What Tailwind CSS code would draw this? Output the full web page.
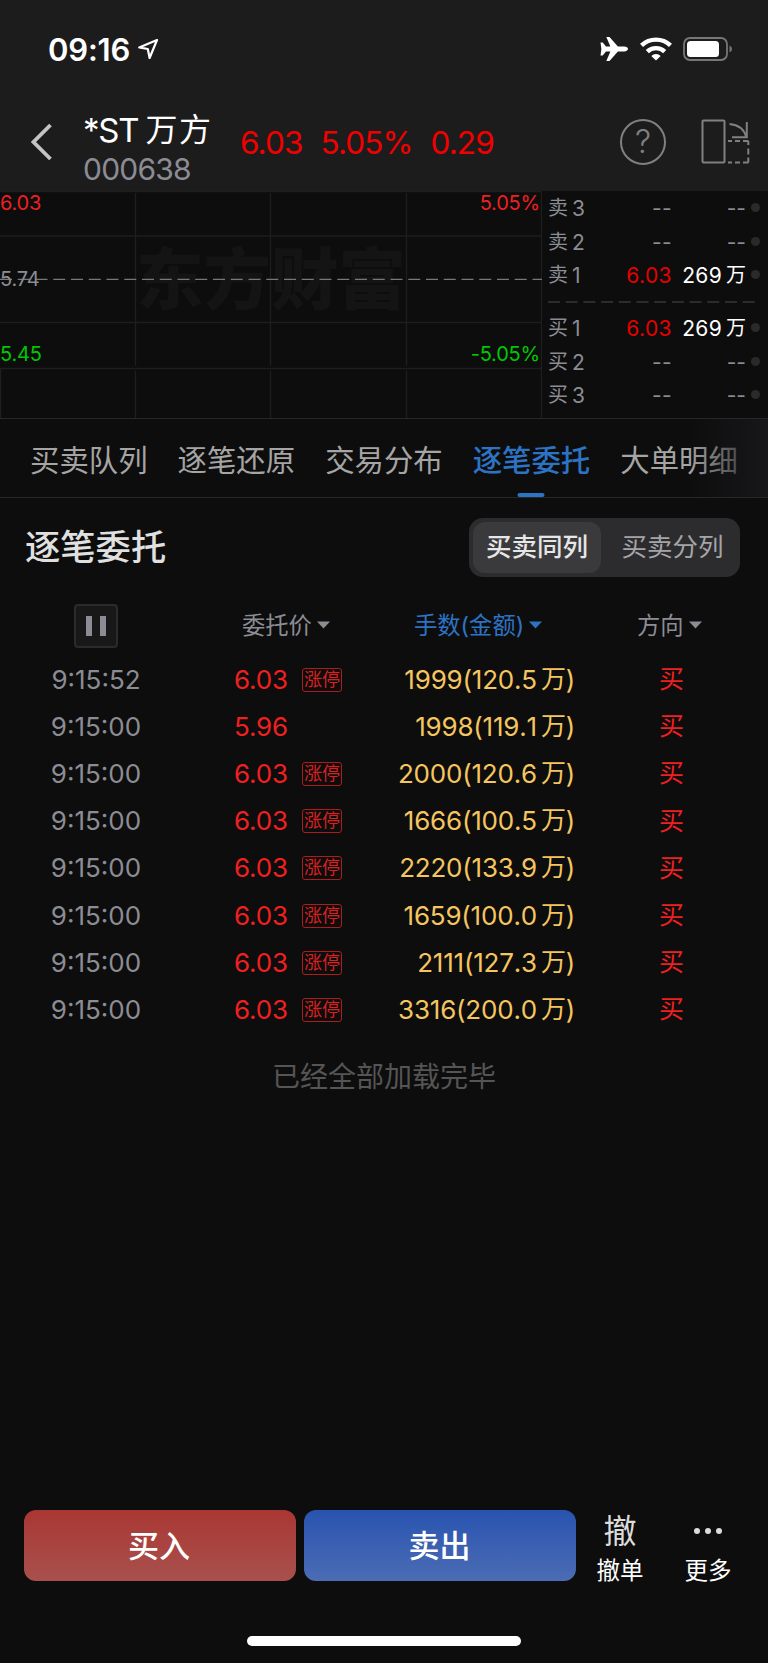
<!DOCTYPE html>
<html lang="zh-CN">
<head>
  <meta charset="UTF-8" />
  <meta name="viewport" content="width=device-width, initial-scale=1.0"/>
  <title>*ST万方 逐笔委托</title>
  <script src="https://cdn.jsdelivr.net/npm/@tailwindcss/browser@4"></script>
  <style>
    body {
      font-family: 'Inter', 'Noto Sans CJK SC', sans-serif;
    }
  </style>
</head>
<body class="bg-[#0d0d0d] text-white w-[768px] h-[1663px] flex flex-col overflow-hidden">

  <!-- Header -->
  <header class="h-[191px] shrink-0 bg-[#1c1c1c] flex flex-col">
    <div class="h-[98px] flex items-center justify-between pl-[48px] pr-[35px]">
      <div class="flex items-center gap-[7px]">
        <span class="text-[31px] leading-none font-semibold tracking-[-0.2px]">09:16</span>
        <svg class="w-[22px] h-[22px]" viewBox="0 0 22 22" fill="none" stroke="#fff" stroke-width="2.2" stroke-linejoin="round">
          <path d="M20 2 L2.2 9.4 L10.8 11 L12.6 20 Z" />
        </svg>
      </div>
      <div class="flex items-center">
        <svg class="w-[28px] h-[26px]" viewBox="0 0 28 26" fill="#fff">
          <path d="M0.5 6.6h2.2l3.3 4h4.400L6.300 1h3.200l8.400 9.600h6.300c2.400 0 3.800 1.300 3.800 2.400s-1.400 2.400-3.800 2.400h-6.300L9.500 25H6.300l4.100-9.600H6l-3.300 4H0.500l0.900-6.400z" />
        </svg>
        <svg class="w-[32px] h-[24px] ml-[12px]" viewBox="0 0 32 24" fill="none" stroke="#fff" stroke-width="4.400">
          <path d="M1.500 8.400 A21 21 0 0 1 30.500 8.400" />
          <path d="M7.300 14.600 A12.500 12.500 0 0 1 24.700 14.600" />
          <path d="M16 23.500 L11.300 19 A6.500 6.500 0 0 1 20.700 19 Z" fill="#fff" stroke="none" />
        </svg>
        <svg class="w-[50px] h-[24px] ml-[11px]" viewBox="0 0 50 24">
          <rect x="1" y="1" width="43" height="22" rx="6" fill="none" stroke="#777" stroke-width="1.800" />
          <rect x="4" y="4" width="32" height="16" rx="3.500" fill="#fff" />
          <path d="M46.500 8.500 Q49 9.500 49 12 T46.500 15.500Z" fill="#777" />
        </svg>
      </div>
    </div>
    <div class="h-[93px] flex items-center pl-[31px] pr-[18px]">
      <svg class="w-[22px] h-[38px] mt-[-5px]" viewBox="0 0 22 38" fill="none" stroke="#c4c4c4" stroke-width="3.800">
        <path d="M19.500 2 L2.500 19 L19.500 36" />
      </svg>
      <div class="ml-[30px] w-[130px] flex flex-col mt-[10px]">
        <div class="text-[33px] leading-[38px] whitespace-nowrap flex"><span class="tracking-[-1.200px]">*ST</span><span class="ml-[7px] text-[32px] tracking-[1.600px]">万方</span></div>
        <div class="text-[30px] leading-[40px] text-[#8c8c94] tracking-[-0.800px]">000638</div>
      </div>
      <div class="flex text-[31.500px] leading-none text-[#f00000] gap-[18px] ml-[27px] mt-[-3px] tracking-[-0.900px]">
        <span>6.03</span><span>5.05%</span><span>0.29</span>
      </div>
      <div class="ml-auto mt-[-5px] flex items-center gap-[35px]">
        <div class="w-[46px] h-[46px] rounded-full border-2 border-[#808080] text-[#808080] text-[32px] leading-none font-light flex items-center justify-center">?</div>
        <svg class="w-[49px] h-[46px]" viewBox="0 0 49 46" fill="none" stroke="#808080" stroke-width="2">
          <rect x="1.500" y="1.500" width="22" height="42" rx="1" />
          <path d="M28.500 5 Q42 6 45.500 18.500 M45.800 3 V18.300 H31" />
          <path d="M27 22h4M34 22h5M42 22h5.500M47.300 22v4M47.300 29.500v6M47.300 38.500v5M27 43.500h4M34 43.500h5M42 43.500h5.500" />
        </svg>
      </div>
    </div>
  </header>

  <!-- Intraday chart and order book -->
  <section class="h-[228px] shrink-0 flex border-b border-[#272727]">
    <div class="relative w-[541px] h-[227px]">
      <div class="absolute left-[136px] top-[54px] text-[67.500px] leading-[70px] font-black text-[#141414] whitespace-nowrap">东方财富</div>
      <svg class="absolute inset-0 w-[542px] h-[227px]" viewBox="0 0 542 227" fill="none">
        <path d="M0 0.500H542M0 45H542M0 131.500H542M0 177.500H542M0.500 178V227M135.500 2V175M270.500 2V175M406.500 2V175M135.500 180V227M270.500 180V227M406.500 180V227M541.500 0V227" stroke="#1e1e1e" stroke-width="1.300" />
        <path d="M0 88.300H542" stroke="#77777c" stroke-width="1.300" stroke-dasharray="12 5.750" />
      </svg>
      <div class="absolute inset-0 pt-[2px] text-[20px] leading-[20px] tracking-[-0.200px]">
        <div class="flex justify-between text-[#ee2020]"><span>6.03</span><span>5.05%</span></div>
        <div class="mt-[56px] text-[#8c8c94]">5.74</div>
        <div class="mt-[55px] flex justify-between text-[#00c800]"><span>5.45</span><span>-5.05%</span></div>
      </div>
    </div>
    <div id="orderBook" class="flex-1 pt-[1px] pl-[8px] pr-[8px] text-[21px] text-[#8c8c94]"></div>
  </section>

  <!-- Tabs -->
  <nav class="relative h-[79px] shrink-0 border-b border-[#272727] flex pl-[30px] gap-[30px] text-[29.400px] leading-[83px] text-[#a5a5a5] whitespace-nowrap">
    <span>买卖队列</span>
    <span>逐笔还原</span>
    <span>交易分布</span>
    <span class="relative font-medium text-[#2d73c4]">逐笔委托<i class="absolute left-1/2 -translate-x-1/2 top-[74px] w-[27px] h-[4px] rounded-full bg-[#2d73c4]"></i></span>
    <span>大单明细</span>
    <div class="absolute right-0 inset-y-0 w-[80px] bg-linear-to-r from-[#17171a]/0 to-[#17171a]"></div>
  </nav>

  <!-- Order list -->
  <main class="grow flex flex-col">
    <div class="h-[98px] flex items-center justify-between pl-[25px] pr-[28px]">
      <h1 class="text-[35.300px] leading-none font-medium text-[#e0e0e0] pt-[2px]">逐笔委托</h1>
      <div class="w-[271px] h-[59px] rounded-[14px] bg-[#2c2c2e] p-[4px] flex text-[25.500px] leading-none">
        <div class="w-[128px] rounded-[12px] bg-[#3a3a3c] text-[#e6e6e6] font-medium flex items-center justify-center">买卖同列</div>
        <div class="flex-1 pl-[8px] text-[#a5a5a8] flex items-center justify-center">买卖分列</div>
      </div>
    </div>
    <div class="h-[59px] flex items-center text-[23.300px] leading-none text-[#8c8c94] whitespace-nowrap">
      <div class="w-[192px] flex justify-center">
        <div class="w-[44px] h-[44px] border-2 border-[#2b2b2b] bg-[#181818] rounded-[4px] flex items-center justify-center gap-[8px]">
          <i class="w-[6px] h-[20px] bg-[#8c8c94]"></i><i class="w-[6px] h-[20px] bg-[#8c8c94]"></i>
        </div>
      </div>
      <div class="w-[172px] pl-[50px] flex items-center gap-[5px]">委托价
        <svg class="w-[13px] h-[8px]" viewBox="0 0 13 8" fill="currentColor"><path d="M0 0.500H13L6.500 7.500Z" /></svg>
      </div>
      <div class="w-[213px] pl-[50px] flex items-center gap-[5px] text-[#2d73c4]">手数(金额)
        <svg class="w-[13px] h-[8px]" viewBox="0 0 13 8" fill="currentColor"><path d="M0 0.500H13L6.500 7.500Z" /></svg>
      </div>
      <div class="pl-[60px] flex items-center gap-[5px]">方向
        <svg class="w-[13px] h-[8px]" viewBox="0 0 13 8" fill="currentColor"><path d="M0 0.500H13L6.500 7.500Z" /></svg>
      </div>
    </div>
    <div id="orders" class="pt-[1px]"></div>
    <p class="mt-[23px] text-center text-[28px] leading-[40px] text-[#555]">已经全部加载完毕</p>
  </main>

  <!-- Trade bar -->
  <footer class="h-[153px] shrink-0 flex flex-col items-center justify-between pb-[17px]">
    <div class="w-full flex pl-[24px]">
      <button class="w-[272px] h-[71px] rounded-[12px] bg-linear-to-b from-[#a93733] to-[#a8504d] text-[31px] leading-none font-medium pr-[2px]">买入</button>
      <button class="w-[272px] h-[71px] ml-[8px] rounded-[12px] bg-linear-to-b from-[#2853b0] to-[#4c6cb4] text-[31px] leading-none font-medium pr-[1px]">卖出</button>
      <div class="w-[88px] flex flex-col items-center leading-none">
        <span class="text-[33px] leading-[42px] text-[#dcdcdc]">撤</span>
        <span class="text-[23.500px] leading-[38px]">撤单</span>
      </div>
      <div class="w-[88px] flex flex-col items-center">
        <span class="h-[42px] flex items-center gap-[5px]">
          <i class="w-[6px] h-[6px] rounded-full bg-[#dcdcdc]"></i><i class="w-[6px] h-[6px] rounded-full bg-[#dcdcdc]"></i><i class="w-[6px] h-[6px] rounded-full bg-[#dcdcdc]"></i>
        </span>
        <span class="text-[23.500px] leading-[38px]">更多</span>
      </div>
    </div>
    <div class="w-[274px] h-[10px] rounded-full bg-white"></div>
  </footer>

  <script>
    const book = [
      { side: '卖', level: 3 },
      { side: '卖', level: 2 },
      { side: '卖', level: 1, price: '6.03', volume: '269' },
      { side: '买', level: 1, price: '6.03', volume: '269' },
      { side: '买', level: 2 },
      { side: '买', level: 3 },
    ];

    const orders = [
      { time: '9:15:52', price: '6.03', limit: true, lots: '1999', amount: '120.5' },
      { time: '9:15:00', price: '5.96', limit: false, lots: '1998', amount: '119.1' },
      { time: '9:15:00', price: '6.03', limit: true, lots: '2000', amount: '120.6' },
      { time: '9:15:00', price: '6.03', limit: true, lots: '1666', amount: '100.5' },
      { time: '9:15:00', price: '6.03', limit: true, lots: '2220', amount: '133.9' },
      { time: '9:15:00', price: '6.03', limit: true, lots: '1659', amount: '100.0' },
      { time: '9:15:00', price: '6.03', limit: true, lots: '2111', amount: '127.3' },
      { time: '9:15:00', price: '6.03', limit: true, lots: '3316', amount: '200.0' },
    ];

    const divider = `
      <svg class="block w-[208px] h-[20px]" viewBox="0 0 208 20"><path d="M0 10H208" stroke="#2c2c2c" stroke-width="2" stroke-dasharray="12 5.700" /></svg>
    `;

    document.getElementById('orderBook').innerHTML = book.map((row, i) => `
      ${i === 3 ? divider : ''}
      <div class="h-[33.400px] flex items-center leading-none">
        <span class="w-[45px] flex gap-[4px]"><span class="text-[20px]">${row.side}</span><span>${row.level}</span></span>
        <span class="w-[79px] text-right tracking-[0.400px] ${row.price ? 'text-[#e60000]' : ''}">${row.price || '--'}</span>
        <span class="w-[74px] flex justify-end gap-[4px] ${row.volume ? 'text-white' : ''}">${row.volume ? `<span class="tracking-[0.300px]">${row.volume}</span><span class="text-[20px]">万</span>` : '--'}</span>
        <i class="w-[9px] h-[9px] ml-[5px] mb-[2px] rounded-full bg-[#2a2a2a]"></i>
      </div>
    `).join('');

    document.getElementById('orders').innerHTML = orders.map(row => `
      <div class="h-[47.200px] flex items-center text-[26px] leading-none whitespace-nowrap">
        <span class="w-[192px] text-center text-[#8c8c94]">${row.time}</span>
        <span class="w-[110px] pl-[42px] tracking-[-0.200px] text-[#f02020]">${row.price}</span>
        <span class="w-[40px]">${row.limit ? '<span class="flex items-center justify-center w-[40px] h-[24px] border border-[#b01c1c] rounded-[3px] text-[18px] text-[#d82020]">涨停</span>' : ''}</span>
        <span class="w-[233px] flex justify-end tracking-[-0.200px] [font-kerning:none] text-[#f5c560]">${row.lots}(${row.amount}<span class="ml-[4px] text-[25px]">万</span>)</span>
        <span class="pl-[84px] text-[25px] text-[#ee2020]">买</span>
      </div>
    `).join('');
  </script>
</body>
</html>
